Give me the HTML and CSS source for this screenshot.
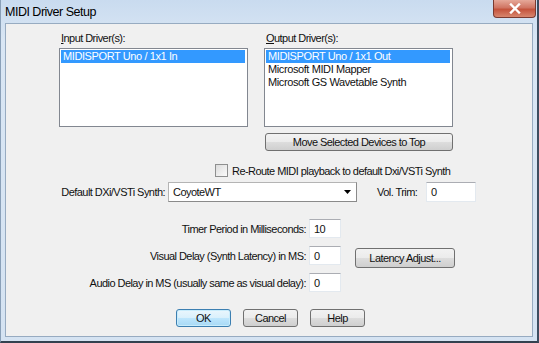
FILE: index.html
```html
<!DOCTYPE html>
<html>
<head>
	<title>MIDI Driver Setup</title>
	<link rel="stylesheet" href="styles.css">
</head>
<body>
	<div class="window">
		<div class="titlebar">
			<span class="title">MIDI Driver Setup</span>
			<span class="close">
				<svg width="14" height="11" viewBox="0 0 14 11"><path d="M3 1.5 L11 9.5 M11 1.5 L3 9.5" stroke="#fff" stroke-width="2.4" stroke-linecap="square"/></svg>
			</span>
		</div>
		<div class="client">
			<div class="drivers">
				<div class="col">
					<div class="lbl"><u>I</u>nput Driver(s):</div>
					<ul class="listbox">
						<li class="sel">MIDISPORT Uno / 1x1 In</li>
					</ul>
				</div>
				<div class="col">
					<div class="lbl"><u>O</u>utput Driver(s):</div>
					<ul class="listbox">
						<li class="sel">MIDISPORT Uno / 1x1 Out</li>
						<li>Microsoft MIDI Mapper</li>
						<li>Microsoft GS Wavetable Synth</li>
					</ul>
					<div class="btn btn-move">Move Selected Devices to Top</div>
				</div>
			</div>

			<div class="check-row">
				<span class="checkbox"></span>
				<span>Re-Route MIDI playback to default Dxi/VSTi Synth</span>
			</div>

			<div class="synth-row">
				<span class="synth-lbl">Default DXi/VSTi Synth:</span>
				<div class="combo">
					<span>CoyoteWT</span>
					<svg width="7" height="4" viewBox="0 0 7 4"><path d="M0 0 H7 L3.5 4 Z" fill="#000"/></svg>
				</div>
				<span class="trim-lbl">Vol. Trim:</span>
				<div class="edit edit-trim">0</div>
			</div>

			<div class="timing">
				<span class="t-lbl">Timer Period in Milliseconds:</span>
				<div class="edit">10</div>
				<span></span>
				<span class="t-lbl">Visual Delay (Synth Latency) in MS:</span>
				<div class="edit">0</div>
				<div class="btn btn-latency">Latency Adjust...</div>
				<span class="t-lbl">Audio Delay in MS (usually same as visual delay):</span>
				<div class="edit">0</div>
				<span></span>
			</div>

			<div class="actions">
				<div class="btn btn-default">OK</div>
				<div class="btn">Cancel</div>
				<div class="btn">Help</div>
			</div>
		</div>
	</div>
</body>
</html>
```

FILE: styles.css
```css
body{
	margin: 0;
	font-family: "Liberation Sans", Arial, sans-serif;
	font-size: 11px;
	letter-spacing: -0.55px;
	color: #111;
}
.window{
	width: 539px;
	height: 343px;
	box-sizing: border-box;
	background: linear-gradient(#c9dbef, #d9e6f4 40px, #d5e3f2);
	border-right: 2px solid #3d4d60;
	border-bottom: 2px solid #33414f;
	border-left: 1px solid #8aa0b8;
}
.titlebar{
	height: 23px;
	display: flex;
	align-items: flex-start;
}
.title{
	font-size: 12.5px;
	letter-spacing: -0.5px;
	margin: 5px 0 0 4px;
	color: #000;
}
.close{
	margin-left: auto;
	margin-right: 1px;
	width: 43px;
	height: 18px;
	box-sizing: border-box;
	display: flex;
	align-items: center;
	justify-content: center;
	background: linear-gradient(#e6a899, #d07563 45%, #c4533c 55%, #d8866e);
	border: 1px solid #7a3a30;
	border-top: none;
	border-radius: 0 0 4px 4px;
}
.client{
	margin: 0 4px 0 4px;
	height: 314px;
	box-sizing: border-box;
	background: #f0f0f0;
	border: 1px solid #97abc1;
	padding-top: 8px;
}
.drivers{
	display: flex;
	gap: 16px;
	padding-left: 53px;
}
.col{
	width: 189px;
}
.lbl{
	line-height: 13px;
	height: 13px;
	padding-left: 2px;
}
.listbox{
	list-style: none;
	margin: 3px 0 0 0;
	padding: 1px 2px 0 1px;
	height: 79px;
	box-sizing: border-box;
	background: #fff;
	border: 1px solid #828790;
}
.listbox li{
	height: 13px;
	line-height: 13px;
	padding-left: 2px;
	white-space: nowrap;
	letter-spacing: -0.4px;
}
.listbox .sel{
	background: #3399ff;
	color: #fff;
}
.btn{
	height: 18px;
	box-sizing: border-box;
	display: flex;
	align-items: center;
	justify-content: center;
	border: 1px solid #707070;
	border-radius: 3px;
	background: linear-gradient(#f2f2f2, #ebebeb 50%, #dddddd 50%, #cfcfcf);
	white-space: nowrap;
}
.btn-move{
	margin: 6px 0 0 1px;
	width: 188px;
}
.check-row{
	display: flex;
	align-items: center;
	gap: 4px;
	height: 13px;
	margin-top: 13px;
	padding-left: 209px;
}
.checkbox{
	width: 13px;
	height: 13px;
	box-sizing: border-box;
	border: 1px solid #8e8f8f;
	background: linear-gradient(135deg, #dcdcdc, #fbfbfb);
}
.synth-row{
	display: flex;
	align-items: center;
	height: 20px;
	margin-top: 5px;
	padding-left: 49px;
}
.synth-lbl{
	width: 110px;
	text-align: right;
	margin-right: 3px;
}
.combo{
	width: 189px;
	height: 20px;
	box-sizing: border-box;
	display: flex;
	align-items: center;
	justify-content: space-between;
	padding: 0 5px 0 4px;
	background: #fff;
	border: 1px solid #b4b4b4;
	border-right-color: #8a8a8a;
	border-bottom-color: #8a8a8a;
}
.trim-lbl{
	width: 49px;
	margin-left: 20px;
}
.edit{
	height: 19px;
	box-sizing: border-box;
	display: flex;
	align-items: center;
	padding-left: 4px;
	background: #fff;
	border: 1px solid #e3e9ef;
	border-top-color: #abadb3;
}
.edit-trim{
	width: 50px;
	height: 20px;
}
.timing{
	display: grid;
	grid-template-columns: 300px 32px auto;
	grid-template-rows: 19px 19px 19px;
	column-gap: 3px;
	row-gap: 8px;
	margin-top: 17px;
}
.t-lbl{
	text-align: right;
	align-self: center;
	white-space: nowrap;
}
.btn-latency{
	width: 100px;
	height: 20px;
	margin: 2px 0 0 11px;
}
.actions{
	display: flex;
	gap: 12px;
	margin-top: 17px;
	padding-left: 170px;
}
.actions .btn{
	width: 55px;
}
.btn-default{
	border-color: #3c7fb1;
	background: linear-gradient(#eaf6fd, #d9f0fc 50%, #bee6fd 50%, #a7d9f5);
	box-shadow: inset 0 0 0 1px #c8ecfc;
}
```
